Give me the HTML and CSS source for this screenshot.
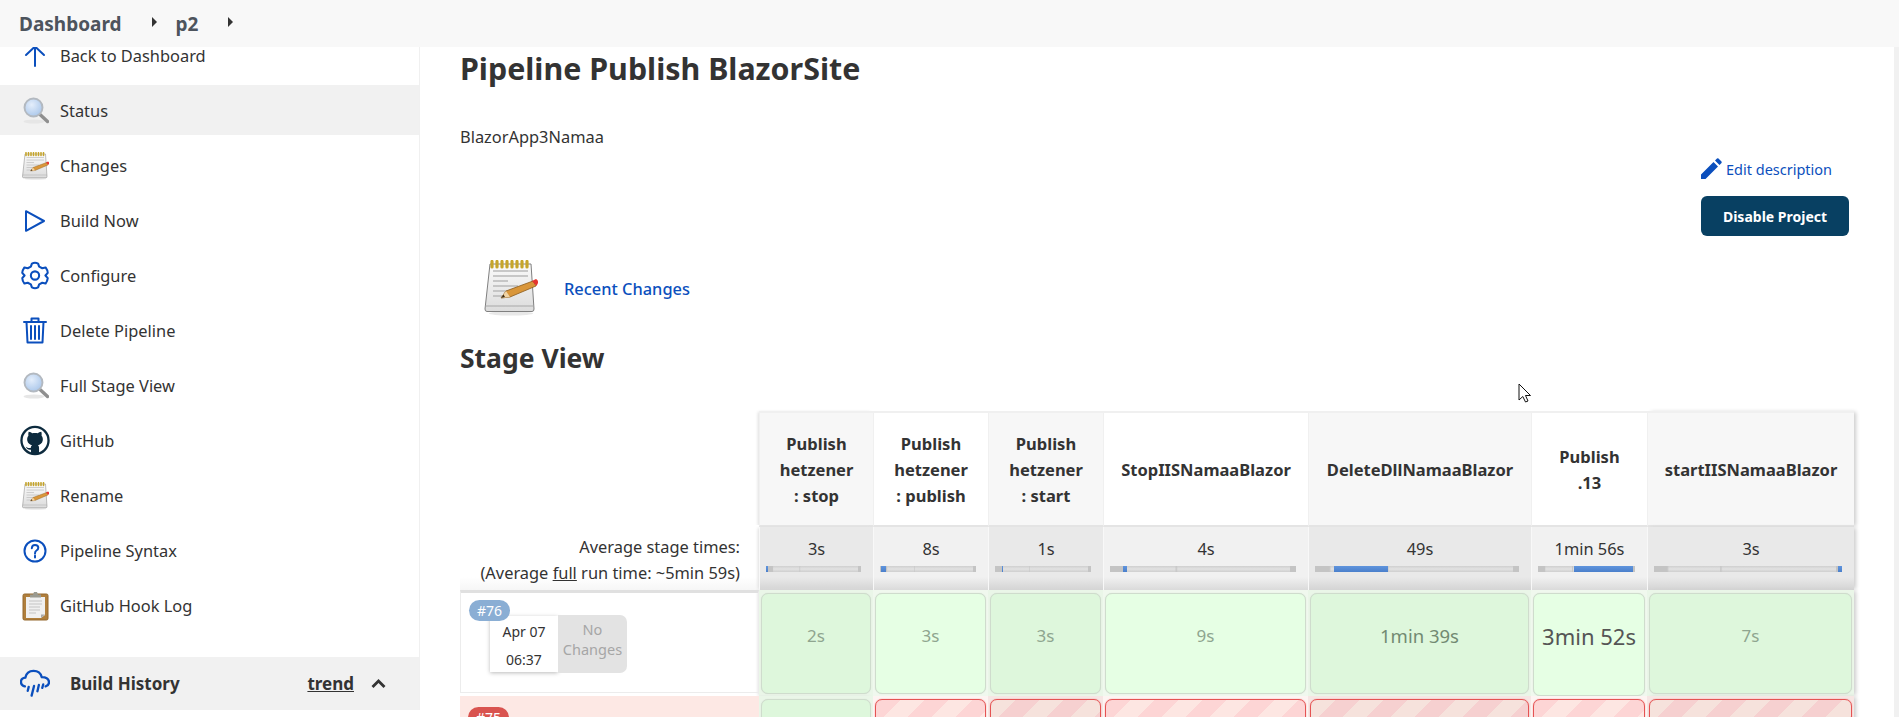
FILE: index.html
```html
<!DOCTYPE html>
<html lang="en">
<head>
<meta charset="utf-8">
<title>p2 - Jenkins</title>
<link rel="stylesheet" href="styles.css">
</head>
<body>
<svg class="defs" width="0" height="0" aria-hidden="true">
  <defs>
    <radialGradient id="lens" cx="40%" cy="35%" r="70%"><stop offset="0" stop-color="#e4eefb"/><stop offset="1" stop-color="#a9c6ea"/></radialGradient>
    <linearGradient id="paper" x1="0" y1="0" x2="0" y2="1"><stop offset="0" stop-color="#fafafa"/><stop offset="1" stop-color="#dcdcdc"/></linearGradient>
    <symbol id="i-glass" viewBox="0 0 27 27">
      <ellipse cx="12" cy="24.5" rx="10.5" ry="2" fill="#e6e6e6"/>
      <path d="M18 17.5 25.5 24.5" stroke="#8f8f8f" stroke-width="3.4" stroke-linecap="round"/>
      <circle cx="11.5" cy="10.5" r="9" fill="url(#lens)" stroke="#b3b9c0" stroke-width="1.9"/>
    </symbol>
    <symbol id="i-note" viewBox="0 0 54 56">
      <ellipse cx="27" cy="53.5" rx="22" ry="2" fill="#e8e8e8"/>
      <path d="M6 4H47L50 49Q50 51.500 48 51.500H3Q1 51.500 1 49Z" fill="url(#paper)" stroke="#808080" stroke-width="1"/>
      <path d="M1.500 46H49.500" stroke="#a8a8a8" stroke-width="1"/>
      <path d="M9 11H44M9 16H44M9 21H24M9 26H34M9 31H28M9 36H20" stroke="#b9b9b9" stroke-width="1.300"/>
      <path d="M8 1.500V7M13 1.500V7M18 1.500V7M23 1.500V7M28 1.500V7M33 1.500V7M38 1.500V7M43 1.500V7" stroke="#c6a52b" stroke-width="3.200" stroke-linecap="round"/>
      <path d="M17 38 22 31 49 21 52 26 26 37Z" fill="#d9963a" stroke="#8a5a1c" stroke-width=".8"/>
      <path d="M17 38 22 31 26 37Z" fill="#f0d3a4"/>
      <path d="M17 38 19.500 34.500 21 37Z" fill="#3a2a15"/>
      <path d="M48 21 52 19Q54.500 20 54 23L52.500 26Z" fill="#e5352f"/>
    </symbol>
    <symbol id="i-clip" viewBox="0 0 27 30">
      <rect x="1" y="3" width="25" height="26" rx="1.500" fill="#b07f3c" stroke="#94692e"/>
      <path d="M4 6H23V24L19 27H4Z" fill="#f0f0f0"/>
      <path d="M19 27V23.500H23Z" fill="#a9a9a9"/>
      <path d="M7 10H20M7 13H20M7 16H18M7 19H18M7 22H14" stroke="#c4c4c4" stroke-width="1.100"/>
      <path d="M8 6V3.500H11L12 1H15L16 3.500H19V6.500H8Z" fill="#9a9a90"/>
    </symbol>
  </defs>
</svg>

<header class="topbar">
  <a class="crumb">Dashboard</a><span class="caret"></span>
  <a class="crumb crumb-p2">p2</a><span class="caret"></span>
</header>

<div class="layout">
  <aside class="sidebar">
    <ul class="tasks">
      <li class="task"><span class="ico"><svg class="line" width="22" height="22" viewBox="0 0 22 22"><path d="M11 21V1.500M2 10 11 1.500 20 10"/></svg></span>Back to Dashboard</li>
      <li class="task active"><span class="ico"><svg width="27" height="27"><use href="#i-glass"/></svg></span>Status</li>
      <li class="task"><span class="ico"><svg width="27" height="28"><use href="#i-note"/></svg></span>Changes</li>
      <li class="task"><span class="ico"><svg class="line" width="22" height="24" viewBox="0 0 22 24"><path d="M2 2.200 20 12 2 21.800Z"/></svg></span>Build Now</li>
      <li class="task"><span class="ico"><svg class="line" width="28" height="29" viewBox="0 0 27 28"><path d="M10.500 2.500Q13.500 1 16.500 2.500L17.500 5.500 20.500 7 23.700 6.200Q25.800 9 25.800 11.500L23.600 14 25.800 16.500Q25.500 19.500 23.700 21.800L20.500 21 17.500 22.500 16.500 25.500Q13.500 27 10.500 25.500L9.500 22.500 6.500 21 3.300 21.800Q1.300 19.500 1.200 16.500L3.400 14 1.200 11.500Q1.300 9 3.300 6.200L6.500 7 9.500 5.500Z"/><circle cx="13.500" cy="14" r="4"/></svg></span>Configure</li>
      <li class="task"><span class="ico"><svg class="line" width="24" height="27" viewBox="0 0 24 27"><path d="M1 5H23M8.500 5V1.500H15.500V5M3.500 5 4.500 25.500H19.500L20.500 5M8 9V22M12 9V22M16 9V22"/></svg></span>Delete Pipeline</li>
      <li class="task"><span class="ico"><svg width="27" height="27"><use href="#i-glass"/></svg></span>Full Stage View</li>
      <li class="task"><span class="ico"><svg width="31" height="31" viewBox="0 0 31 31"><circle cx="15.500" cy="15.500" r="14" fill="#fff" stroke="#0d2b3e" stroke-width="2.400"/><path fill="#0d2b3e" d="M9 6.500C10.500 6.500 12 7.500 12.500 8 14.500 7.500 16.500 7.500 18.500 8 19 7.500 20.500 6.500 22 6.500 22.500 8 22.500 9.500 22.300 10.500 23.500 12 23.800 13.500 23.500 15.500 23 18.500 20.500 20 18.500 20.300 19.500 21 19.700 22 19.700 24V29H11.300V25C8.500 25.500 7 24 6 22 7 22.500 8.500 24 11.300 23 11.300 21.500 11.500 20.800 12.500 20.300 10.500 20 8 18.500 7.500 15.500 7.200 13.500 7.500 12 8.700 10.500 8.500 9.500 8.500 8 9 6.500Z"/></svg></span>GitHub</li>
      <li class="task"><span class="ico"><svg width="27" height="28"><use href="#i-note"/></svg></span>Rename</li>
      <li class="task"><span class="ico"><svg class="line" width="24" height="24" viewBox="0 0 24 24"><circle cx="12" cy="12" r="10.500"/><path d="M8.800 9.300Q9 6 12 6 15.300 6 15.300 8.800 15.300 10.500 13.500 11.500 12 12.400 12 14.500"/><path d="M12 16.500V18.500"/></svg></span>Pipeline Syntax</li>
      <li class="task"><span class="ico"><svg width="27" height="30"><use href="#i-clip"/></svg></span>GitHub Hook Log</li>
    </ul>
    <div class="history">
      <span class="ico"><svg class="line heavy" width="31" height="29" viewBox="0 0 31 29"><path d="M5 17.500Q1 16.500 1 12.800 1 9 5.500 8.500 7 1.500 14 1.500 20.800 1.500 22.500 8 29.500 8 30 13 30 16.500 26.500 17.500"/><path d="M9 18 8 22M14.500 17 12 27M19.500 16 18 22.500M24 15.500 23 19"/></svg></span>
      <span class="history-title">Build History</span>
      <a class="trend">trend</a>
      <svg class="chev" width="15" height="9" viewBox="0 0 15 9"><path d="M1.500 8 7.500 2 13.500 8"/></svg>
    </div>
  </aside>

  <main class="main">
    <h1 class="title">Pipeline Publish BlazorSite</h1>
    <p class="desc">BlazorApp3Namaa</p>
    <div class="actions">
      <a class="edit"><svg width="21" height="21" viewBox="0 0 21 21"><path fill="#0b4fbd" d="M0 21V16.500L12.500 4 17 8.500 4.500 21ZM14 2.500 16 .5Q16.700 0 17.500 .5L20.500 3.500Q21 4.300 20.500 5L18.500 7Z"/></svg>Edit description</a>
      <button class="disable">Disable Project</button>
    </div>
    <div class="recent">
      <svg width="54" height="56"><use href="#i-note"/></svg>
      <a class="recent-link">Recent Changes</a>
    </div>
    <h2 class="stage-h">Stage View</h2>

    <div class="stage">
      <div class="legend"></div>
      <div class="head odd"><span>Publish<br>hetzener<br>: stop</span></div>
      <div class="head"><span>Publish<br>hetzener<br>: publish</span></div>
      <div class="head odd"><span>Publish<br>hetzener<br>: start</span></div>
      <div class="head"><span>StopIISNamaaBlazor</span></div>
      <div class="head odd"><span>DeleteDllNamaaBlazor</span></div>
      <div class="head"><span>Publish<br>.13</span></div>
      <div class="head odd"><span>startIISNamaaBlazor</span></div>

      <div class="avg-label">Average stage times:<br>(Average <u>full</u> run time: ~5min 59s)</div>
      <div class="avg odd">3s<div class="bar"><i class="seg" style="left:0%;width:2%"></i></div></div>
      <div class="avg">8s<div class="bar"><i class="seg" style="left:1%;width:5%"></i></div></div>
      <div class="avg odd">1s<div class="bar"><i class="seg" style="left:7%;width:1.500%"></i></div></div>
      <div class="avg">4s<div class="bar"><i class="seg" style="left:7%;width:2%"></i></div></div>
      <div class="avg odd">49s<div class="bar"><i class="seg" style="left:9.400%;width:26.600%"></i></div></div>
      <div class="avg">1min 56s<div class="bar"><i class="seg" style="left:37%;width:61%"></i></div></div>
      <div class="avg odd">3s<div class="bar"><i class="seg" style="left:98%;width:2%"></i></div></div>

      <div class="build">
        <span class="badge">#76</span>
        <div class="when"><span>Apr 07</span><span>06:37</span></div>
        <div class="nochg">No Changes</div>
      </div>
      <div class="cell odd"><div class="box s1">2s</div></div>
      <div class="cell"><div class="box s1">3s</div></div>
      <div class="cell odd"><div class="box s1">3s</div></div>
      <div class="cell"><div class="box s1">9s</div></div>
      <div class="cell odd"><div class="box s2">1min 39s</div></div>
      <div class="cell tall"><div class="box s3">3min 52s</div></div>
      <div class="cell odd"><div class="box s1">7s</div></div>

      <div class="build failed"><span class="badge">#75</span></div>
      <div class="cell odd"><div class="box"></div></div>
      <div class="cell fail"><div class="box"></div></div>
      <div class="cell odd fail"><div class="box"></div></div>
      <div class="cell fail"><div class="box"></div></div>
      <div class="cell odd fail"><div class="box"></div></div>
      <div class="cell fail"><div class="box"></div></div>
      <div class="cell odd fail"><div class="box"></div></div>
    </div>
    <svg class="cursor" width="14" height="20" viewBox="0 0 14 20"><path d="M1 1V17L4.800 13.500 7.500 19 10 18 7.500 12.500H12.500Z" fill="#fff" stroke="#111" stroke-width="1"/></svg>
  </main>
</div>
<div class="scrollbar"></div>
</body>
</html>
```

FILE: styles.css
```css
* { box-sizing: border-box; }
html, body { margin: 0; height: 717px; overflow: hidden; background: #fff; }
body { font-family: "Noto Sans", "Open Sans", sans-serif; font-size: 16.4px; color: #333; position: relative; }
.defs { position: absolute; }
a { color: inherit; text-decoration: none; }

.topbar { position: relative; z-index: 2; height: 47px; background: #f8f8f8; display: flex; align-items: center; padding-left: 19px; color: #4d545d; }
.crumb { font-weight: 700; font-size: 19px; }
.crumb-p2 { margin-left: 19px; }
.caret { width: 0; height: 0; border-left: 5px solid #333; border-top: 5px solid transparent; border-bottom: 5px solid transparent; margin: 0 0 3px 30px; }

.layout { display: flex; height: 670px; }
.sidebar { width: 420px; flex: none; border-right: 1px solid #f0f0f0; height: 680px; margin-top: -17px; }
.tasks { list-style: none; margin: 0; padding: 0; display: flex; flex-direction: column; gap: 5px; }
.task { height: 50px; display: flex; align-items: center; padding: 1px 0 0 20px; color: #333; }
.task.active { background: #f1f1f1; }
.ico { width: 30px; height: 30px; margin-right: 10px; display: flex; align-items: center; justify-content: center; flex: none; }
.line { fill: none; stroke: #0b4fbd; stroke-width: 2; stroke-linecap: round; stroke-linejoin: round; }
.line.heavy { stroke-width: 2.400; }
.history { margin-top: 27px; height: 53px; background: #f1f1f1; display: flex; align-items: center; padding-left: 20px; }
.history .ico { margin-right: 20px; }
.history-title { font-weight: 700; font-size: 17px; flex: 1; }
.trend { font-weight: 700; font-size: 17px; text-decoration: underline; margin-right: 17px; }
.chev { fill: none; stroke: #333; stroke-width: 2.800; margin-right: 33px; }

.main { flex: 1; padding: 0 45px 0 40px; position: relative; min-width: 0; }
.title { margin: 0; font-size: 30.400px; font-weight: 700; line-height: 44px; }
.desc { margin: 34px 0 0; line-height: 24px; }
.actions { display: flex; flex-direction: column; align-items: flex-start; width: 148px; margin: 0 0 0 auto; position: relative; left: -5px; }
.edit { display: flex; align-items: center; gap: 4px; color: #0b4fbd; font-size: 14.500px; height: 21px; margin-top: 9px; white-space: nowrap; }
.disable { margin-top: 17px; width: 148px; height: 40px; background: #084062; color: #fff; border: 0; border-radius: 6px; font: 700 14px "Noto Sans", sans-serif; }
.recent { display: flex; align-items: center; gap: 26px; margin: 24px 0 0 24px; height: 56px; }
.recent-link { color: #0b4fbd; font-weight: 500; }
.stage-h { margin: 24px 0 0; font-size: 26.500px; font-weight: 700; line-height: 36px; }

.stage { margin-top: 35px; display: grid; width: 1394px; grid-template-columns: 299px 114px 115px 115px 205px 223px 116px 207px; grid-template-rows: 116px 63px 106px 60px; }
.stage > :nth-child(8n) { box-shadow: 3px 0 4px -1px #ccc; }
.stage > :nth-child(8n+2) { box-shadow: -2px 0 3px -1px #ddd; }
.legend { background: #fff; }
.head { display: flex; align-items: center; justify-content: center; text-align: center; font-weight: 700; font-size: 16.500px; line-height: 26px; background: #fff; border-top: 2px solid #f0f0f0; border-left: 1px solid #f0f0f0; border-bottom: 2px solid #e4e4e4; padding-top: 1px; }
.head.odd { background: #f7f7f7; }
.avg-label { text-align: right; line-height: 26px; padding: 9px 19px 0 0; margin-top: -2px; background: linear-gradient(#fff 52px, #f6f6f6 65px); }
.avg { text-align: center; background: linear-gradient(#f1f1f1 50px, #dadada 63px); padding-top: 9px; line-height: 26px; border-left: 1px solid #f8f8f8; }
.avg.odd { background: linear-gradient(#e9e9e9 50px, #d4d4d4 63px); }
.bar { position: relative; height: 6px; margin: 4px 12px 0 6px; background: linear-gradient(90deg, #c4c4c4 0 7%, transparent 8% 35%, #c6c6c6 35.500%, transparent 36.500% 97%, #c4c4c4 97%), linear-gradient(#cfcfcf, #e2e2e2 50%, #cfcfcf); }
.seg { position: absolute; top: 0; bottom: 0; background: linear-gradient(#5f94dd, #4a7fcb); }

.build { position: relative; border: 1px solid #ececec; border-top: 3px solid #e0e0e0; display: flex; align-items: flex-start; padding: 23px 0 0 29px; margin-bottom: 3px; }
.build.failed { background: #fde8e4; border: 0; margin: 0; }
.badge { position: absolute; z-index: 1; left: 8px; top: 7px; width: 41px; height: 21px; border-radius: 11px; background: #8aaed4; color: #fff; font-size: 14px; line-height: 21px; text-align: center; }
.failed .badge { background: #d9534f; top: 11px; }
.when { width: 68px; height: 56px; background: #fff; box-shadow: 0 1px 4px #bbb; display: flex; flex-direction: column; justify-content: space-between; align-items: center; padding: 4px 0 0; font-size: 14px; line-height: 24px; }
.nochg { width: 69px; height: 58px; margin-top: -1px; background: #e3e3e3; border-radius: 0 7px 7px 0; color: #a6a6a6; font-size: 14.500px; line-height: 20px; text-align: center; padding: 4px 2px 0; }

.cell { background: #f0f8ee; padding: 3px 2px 2px; }
.cell.odd { background: #eaf6e8; }
.cell.tall { padding-bottom: 0; }
.cell .box { height: 100%; border: 1px solid #cfdccd; box-shadow: 0 0 1px #cfdccd; border-radius: 7px; background: #e6ffe4; text-align: center; padding-top: 28px; color: #8fa58f; }
.cell.odd .box { background: #def7dc; }
.cell.fail { background: #fdf4f2; }
.cell.fail.odd { background: #f6e6e4; }
.cell.fail .box { border-color: #e55353; box-shadow: 0 0 1px #e55353; background: repeating-linear-gradient(135deg, #fdd5d5 0 17px, #fde6e2 17px 34px); }
.cell.fail.odd .box { background: repeating-linear-gradient(135deg, #f6e2dc 0 17px, #f6d0d0 17px 34px); }
.s1 { font-size: 17px; line-height: 28px; }
.cell .s2 { font-size: 18.500px; line-height: 28px; color: #728a72; }
.cell .s3 { font-size: 22px; line-height: 28px; color: #555; }

.cursor { position: absolute; left: 1098px; top: 336px; }
.scrollbar { position: absolute; right: 0; top: 47px; bottom: 0; width: 5px; background: #f1f1f1; }
```
